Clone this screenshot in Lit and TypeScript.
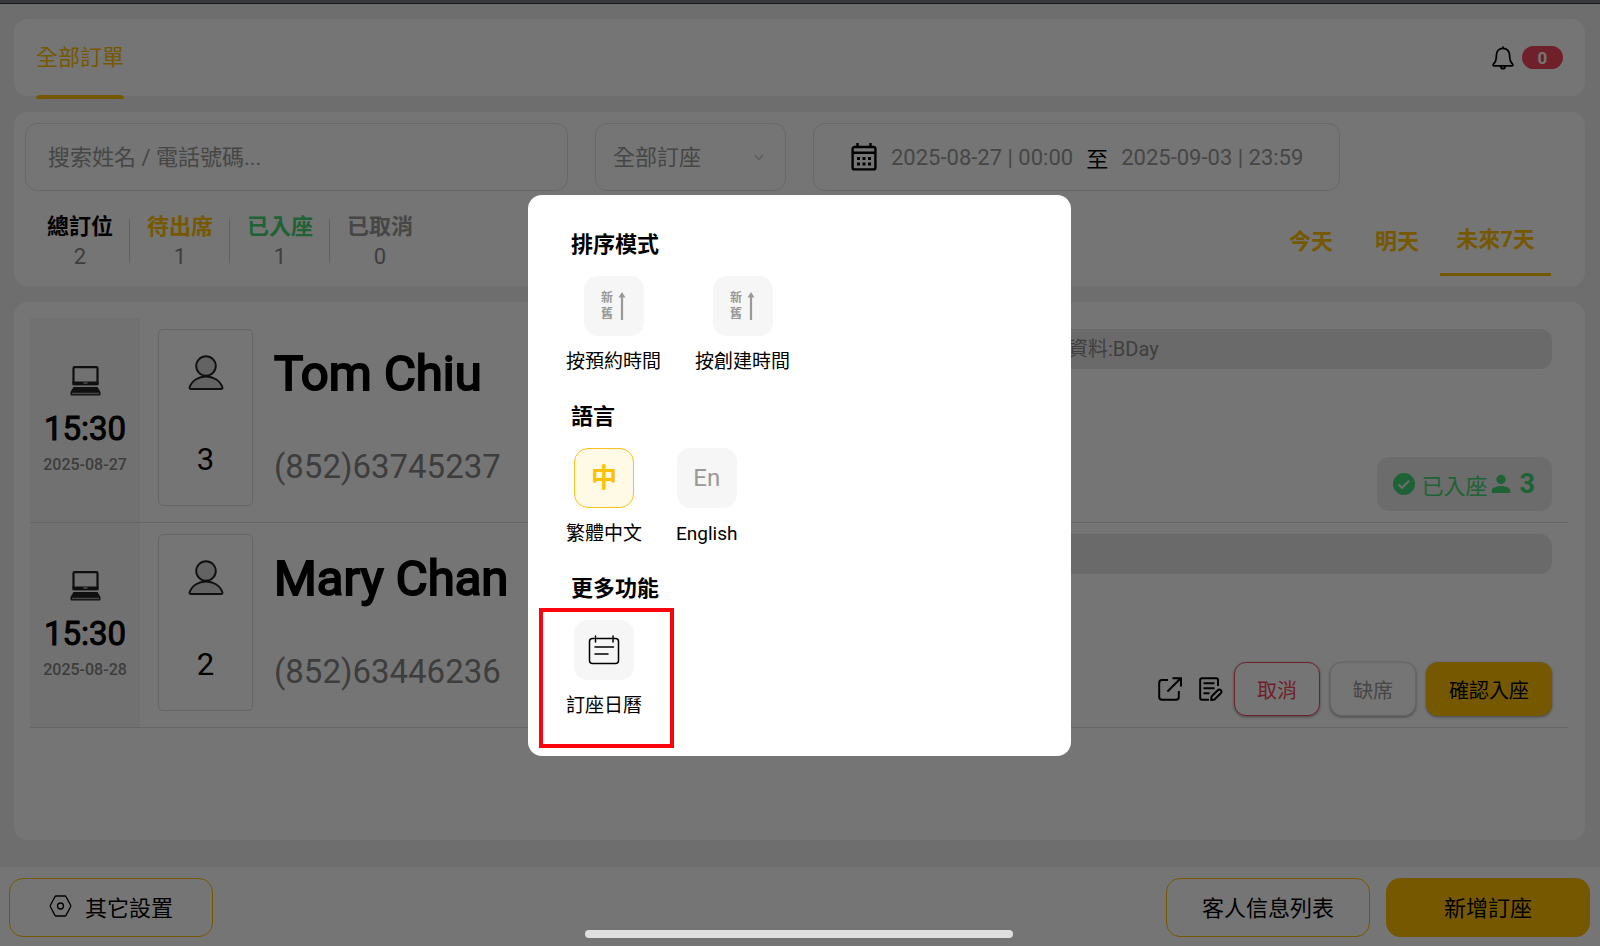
import { LitElement, html, css, svg } from "lit";
import { customElement, property } from "lit/decorators.js";

const font = css`
  * { box-sizing: border-box; }
  button, input, select { font: inherit; color: inherit; margin: 0; }
  button { cursor: pointer; padding: 0; border: 0; background: none; }
  svg { display: block; flex: none; }
  h2, p { margin: 0; }
`;

const laptopIcon = svg`<svg width="32" height="30" viewBox="0 0 32 30">
  <rect x="4.500" y="1.200" width="24" height="17" rx="1" fill="none" stroke="#222" stroke-width="2.200"/>
  <path d="M3.500 15.500h26v3.700h-26z" fill="#222"/><path d="M14.500 16.500h4v1h-4z" fill="#eee"/>
  <path d="M4.500 21h24l3 5v2.500q0 1-1 1h-28q-1 0-1-1V26z" fill="#222"/>
  <path d="M3 26.700h27v1.500H3z" fill="#999"/></svg>`;

const guestIcon = svg`<svg width="36" height="36" viewBox="0 0 36 36" fill="#d8d8d8" stroke="#222" stroke-width="1.900" stroke-linejoin="round">
  <circle cx="18" cy="11" r="9.800"/>
  <path d="M1.500 32.500C4 25 11 21.500 18 21.500S32 25 34.500 32.500Q34.800 34 33 34H3Q1.200 34 1.500 32.500z"/></svg>`;

const calendarIcon = svg`<svg width="26" height="28" viewBox="0 0 26 28" fill="none" stroke="#000" stroke-width="2.400">
  <rect x="1.600" y="4" width="22.800" height="22.400" rx="2"/><path d="M1.600 9.800h22.800M6.500 0v4.500M19.500 0v4.500"/>
  <path d="M6 15.500h3M11.500 15.500h3M17 15.500h3M6 21h3M11.500 21h3M17 21h3" stroke-width="3"/></svg>`;

const bellIcon = svg`<svg width="22" height="24" viewBox="0 0 24 26" fill="none" stroke="#000" stroke-width="1.900" stroke-linejoin="round" stroke-linecap="round">
  <path d="M12 1v1.500M12 2.500c-4.500 0-7.200 3.300-7.200 7.500 0 5.200-.8 7.500-3 9.300-1 .9-.8 2.200.4 2.200h19.600c1.200 0 1.400-1.300.4-2.200-2.200-1.800-3-4.100-3-9.300 0-4.200-2.700-7.500-7.200-7.500z"/>
  <path d="M9.500 22c.3 2 1.200 2.700 2.500 2.700s2.200-.7 2.500-2.700"/></svg>`;

const openIcon = svg`<svg width="24" height="24" viewBox="0 0 24 24" fill="none" stroke="#000" stroke-width="2">
  <path d="M10 3H4Q1.200 3 1.200 6v14q0 2.800 2.800 2.800h14q2.800 0 2.800-2.800v-6M14.500 1.200H23v8.300M22.500 1.500L9.500 14.500"/></svg>`;

const editIcon = svg`<svg width="24" height="24" viewBox="0 0 24 24" fill="none" stroke="#000" stroke-width="2" stroke-linejoin="round">
  <path d="M19 9V3q0-1.800-1.800-1.800H3Q1.200 1.200 1.200 3v18q0 1.800 1.800 1.800h7M4.500 6.200h11M4.500 11.200h11M4.500 16.200h6"/>
  <path d="M12.500 19.500l6.300-6.300q1.500-1.300 3 0t0 3l-6.300 6.300-3.300.6z"/></svg>`;

const hexIcon = svg`<svg width="23" height="22" viewBox="0 0 23 22" fill="none" stroke="#000" stroke-width="1.300" stroke-linejoin="round">
  <path d="M7 1h9q.7 0 1 .6l4.600 8.600q.4.800 0 1.600L17 20.400q-.3.600-1 .6H7q-.7 0-1-.6l-4.600-8.600q-.4-.8 0-1.600L6 1.600Q6.300 1 7 1z"/><circle cx="11.500" cy="11" r="3"/></svg>`;

const checkIcon = svg`<svg width="22" height="22" viewBox="0 0 22 22"><circle cx="11" cy="11" r="11" fill="#43d675"/>
  <path d="M5.500 11.500l3.500 3.300 7.200-7" fill="none" stroke="#ebebeb" stroke-width="2"/></svg>`;

const personIcon = svg`<svg width="20" height="20" viewBox="0 0 20 20" fill="#43d675"><circle cx="10" cy="5.500" r="4.700"/>
  <path d="M.8 19v-2.300C.8 13.500 6 12 10 12s9.200 1.500 9.200 4.700V19z"/></svg>`;

const arrowIcon = svg`<svg width="8" height="28" viewBox="0 0 8 28"><path d="M4 0l3.500 5.500h-7z" fill="#999"/><path d="M4 4v24" stroke="#999" stroke-width="2.200"/></svg>`;

const agendaIcon = svg`<svg width="32" height="30" viewBox="0 0 32 30" fill="none" stroke="#000" stroke-width="1.500" stroke-linecap="round">
  <path d="M6 3.500H4.500Q1.500 3.500 1.500 6.500v19q0 3 3 3h23q3 0 3-3v-19q0-3-3-3H26M9 3.500h14.500M7.500 1v6M25 1v6"/><path d="M7 12h18.500M7 19h13" /></svg>`;

interface Booking {
  time: string; date: string; guests: number; name: string; phone: string; note: string; seated: boolean;
}

@customElement("booking-row")
export class BookingRow extends LitElement {
  @property({ attribute: false }) booking!: Booking;

  static styles = [font, css`
    :host { display: flex; height: 205px; border-bottom: 1px solid #dcdcdc; }
    .when { width: 110px; background: #f7f7f7; display: flex; flex-direction: column; align-items: center; padding-top: 48px; }
    .time { font-size: 33px; line-height: 40px; margin-top: 13px; -webkit-text-stroke: 1px currentColor; }
    .date { font-size: 16px; line-height: 20px; font-weight: 500; color: #868686; margin-top: 6px; }
    .party { width: 95px; height: 177px; margin: 11px 0 0 18px; border: 1px solid #dadada; border-radius: 5px;
      display: flex; flex-direction: column; align-items: center; justify-content: space-between; padding: 25px 0; }
    .count { font-size: 31px; line-height: 40px; }
    .who { flex: 1; padding: 26px 0 0 21px; white-space: nowrap; }
    .name { font-size: 49px; line-height: 60px; -webkit-text-stroke: 2px currentColor; }
    .phone { font-size: 33px; line-height: 40px; color: #868686; margin-top: 43px; }
    .side { width: 502px; margin: 11px 16px 11px 0; display: flex; flex-direction: column; justify-content: space-between; align-items: flex-end; }
    .note { width: 100%; height: 40px; line-height: 40px; border-radius: 12px; background: #e6e6e6; color: #8a8a8a; font-size: 20px; padding-left: 18px; }
    .state { display: flex; align-items: center; height: 54px; border-radius: 12px; background: #ebebeb; color: #43d675; padding: 0 17px 0 16px; font-size: 22px; }
    .state .label { margin: 0 3px 0 6px; }
    .state .num { font-size: 27px; font-weight: 700; margin-left: 9px; }
    .actions { display: flex; align-items: center; }
    .tool { margin-right: 17px; }
    .tool.edit { margin-right: 11px; }
    .act { height: 54px; width: 86px; border-radius: 12px; font-size: 20px; background: #fff; box-shadow: 0 1px 3px #0006; margin-right: 10px; }
    .cancel { border: 1px solid #f4465f; color: #f4465f; }
    .absent { border: 1px solid #e0e0e0; color: #999; }
    .confirm { width: 126px; background: #ffc000; margin-right: 0; }
  `];

  render() {
    const b = this.booking;
    return html`
      <div class="when">${laptopIcon}<div class="time">${b.time}</div><div class="date">${b.date}</div></div>
      <div class="party">${guestIcon}<div class="count">${b.guests}</div></div>
      <div class="who"><div class="name">${b.name}</div><div class="phone">${b.phone}</div></div>
      <div class="side">
        <div class="note">${b.note}</div>
        ${b.seated
          ? html`<div class="state">${checkIcon}<span class="label">已入座</span>${personIcon}<span class="num">${b.guests}</span></div>`
          : html`<div class="actions">
              <button class="tool" aria-label="open">${openIcon}</button>
              <button class="tool edit" aria-label="edit">${editIcon}</button>
              <button class="act cancel">取消</button>
              <button class="act absent">缺席</button>
              <button class="act confirm">確認入座</button>
            </div>`}
      </div>`;
  }
}

@customElement("settings-dialog")
export class SettingsDialog extends LitElement {
  static styles = [font, css`
    :host { display: block; width: 543px; border-radius: 14px; background: #fff; padding: 34px 12px 8px 11px; }
    h2 { font-size: 22px; line-height: 32px; font-weight: 700; margin-left: 32px; }
    .group { display: flex; gap: 34px; padding: 15px 0 25px 27px; }
    .option { display: flex; flex-direction: column; align-items: center; gap: 12px; font-size: 19px; line-height: 28px; }
    .tile { width: 60px; height: 60px; border-radius: 14px; background: #f6f6f6; color: #999; display: flex; align-items: center; justify-content: center; gap: 5px; }
    .order { display: flex; flex-direction: column; font-size: 12px; line-height: 16px; font-weight: 700; }
    .tile.on { border: 1px solid #f8c21c; background: #fffae6; color: #ffc000; font-weight: 700; font-size: 26px; }
    .en { font-size: 24px; }
    .marked { width: max-content; border: 4px solid #f80510; padding: 8px 28px 24px 23px; margin-top: 3px; }
  `];

  sortOption(label: string) {
    return html`<button class="option">
      <span class="tile"><span class="order"><span>新</span><span>舊</span></span>${arrowIcon}</span>${label}</button>`;
  }

  render() {
    return html`
      <h2>排序模式</h2>
      <div class="group">${this.sortOption("按預約時間")}${this.sortOption("按創建時間")}</div>
      <h2>語言</h2>
      <div class="group">
        <button class="option"><span class="tile on">中</span>繁體中文</button>
        <button class="option"><span class="tile en">En</span>English</button>
      </div>
      <h2>更多功能</h2>
      <div class="marked"><button class="option"><span class="tile">${agendaIcon}</span>訂座日曆</button></div>`;
  }
}

@customElement("app-root")
export class AppRoot extends LitElement {
  private bookings: Booking[] = [
    { time: "15:30", date: "2025-08-27", guests: 3, name: "Tom Chiu", phone: "(852)63745237", note: "資料:BDay", seated: true },
    { time: "15:30", date: "2025-08-28", guests: 2, name: "Mary Chan", phone: "(852)63446236", note: "", seated: false },
  ];

  static styles = [font, css`
    :host { display: flex; flex-direction: column; position: relative; min-height: 100vh; background: #f0f0f0; color: #000;
      font-family: Roboto, "Noto Sans CJK TC", sans-serif; font-size: 22px; }
    .strip { height: 4px; background: #787d84; border-bottom: 1px solid #33383e; }
    main { flex: 1; display: flex; flex-direction: column; gap: 16px; padding: 15px 15px 27px 14px; }
    .card { background: #fff; border-radius: 14px; }
    .head { height: 77px; display: flex; justify-content: space-between; padding: 0 22px; }
    .tab { height: 80px; color: #ffc000; display: flex; flex-direction: column; }
    .tab span { flex: none; padding-top: 2px; line-height: 74px; }
    .tab i { flex: none; width: 100%; height: 4px; border-radius: 4px 4px 0 0; background: #ffc000; }
    .alerts { display: flex; align-items: center; gap: 8px; }
    .badge { width: 41px; height: 23px; border-radius: 12px; background: #f4465f; color: #fff; font-size: 17px; line-height: 24px; font-weight: 700; text-align: center; }
    .filters { height: 174px; padding: 11px; }
    .fields { display: flex; gap: 27px; }
    .field { height: 68px; border: 1px solid #e2e2e2; border-radius: 12px; background: #fff; color: #999; }
    .search { width: 543px; padding: 0 22px; outline: 0; }
    .search::placeholder { color: #999; opacity: 1; }
    .pick { display: flex; align-items: center; width: 191px; padding: 0 21px 0 17px; }
    .pick select { flex: 1; border: 0; appearance: none; background: none; outline: 0; padding: 0; }
    .dates { display: flex; align-items: center; width: 527px; padding-left: 37px; white-space: nowrap; }
    .dates .from { margin-left: 14px; }
    .dates .to { color: #000; margin: 0 13px; }
    .summary { display: flex; justify-content: space-between; padding: 10px 23px 0 5px; }
    .stats { display: flex; padding-top: 11px; }
    .stat { width: 100px; height: 60px; text-align: center; line-height: 30px; color: #888; }
    .stat b { display: block; font-weight: 700; }
    .sep { width: 1px; height: 44px; margin: 7px 0 0 -1px; background: #d4d4d4; }
    .total b { color: #000; } .wait b { color: #ffc000; } .seated b { color: #43d675; } .gone b { color: #999; }
    .days { display: flex; }
    .day { color: #ffc000; font-weight: 700; height: 75px; width: 86px; }
    .day.on { width: 111px; border-bottom: 3px solid #ffc000; }
    .list { flex: 1; padding: 16px 17px 0 16px; }
    footer { height: 79px; background: #fff; display: flex; gap: 16px; padding: 11px 10px 0 9px; }
    .big { width: 204px; height: 59px; border-radius: 14px; border: 1px solid #ffc000; display: flex; align-items: center; justify-content: center; gap: 13px; padding-bottom: 3px; }
    .primary { background: #ffc000; }
    .push { margin-left: auto; }
    .shade { position: absolute; inset: 0; background: rgba(0, 0, 0, .54); display: flex; align-items: center; justify-content: center; padding: 5px 1px 0 0; }
    .home { position: absolute; bottom: 8px; left: 50%; margin-left: -215px; width: 428px; height: 8px; border-radius: 4px; background: #dedede; }
  `];

  render() {
    return html`
      <div class="strip"></div>
      <main>
        <header class="card head">
          <button class="tab"><span>全部訂單</span><i></i></button>
          <div class="alerts">${bellIcon}<span class="badge">0</span></div>
        </header>
        <section class="card filters">
          <div class="fields">
            <input class="field search" aria-label="搜索" placeholder="搜索姓名 / 電話號碼...">
            <label class="field pick"><select aria-label="全部訂座"><option>全部訂座</option></select>
              <svg width="10" height="7" viewBox="0 0 10 7" fill="none" stroke="#ccc" stroke-width="1.500"><path d="M1 1l4 4.500L9 1"/></svg></label>
            <div class="field dates">${calendarIcon}<span class="from">2025-08-27 | 00:00</span><span class="to">至</span><span>2025-09-03 | 23:59</span></div>
          </div>
          <div class="summary">
            <div class="stats">
              <div class="stat total"><b>總訂位</b>2</div><i class="sep"></i>
              <div class="stat wait"><b>待出席</b>1</div><i class="sep"></i>
              <div class="stat seated"><b>已入座</b>1</div><i class="sep"></i>
              <div class="stat gone"><b>已取消</b>0</div>
            </div>
            <nav class="days">
              <button class="day">今天</button><button class="day">明天</button><button class="day on">未來7天</button>
            </nav>
          </div>
        </section>
        <section class="card list">${this.bookings.map((b) => html`<booking-row .booking=${b}></booking-row>`)}</section>
      </main>
      <footer>
        <button class="big">${hexIcon}其它設置</button>
        <button class="big push">客人信息列表</button>
        <button class="big primary">新增訂座</button>
      </footer>
      <div class="shade"><settings-dialog role="dialog"></settings-dialog></div>
      <div class="home"></div>`;
  }
}
